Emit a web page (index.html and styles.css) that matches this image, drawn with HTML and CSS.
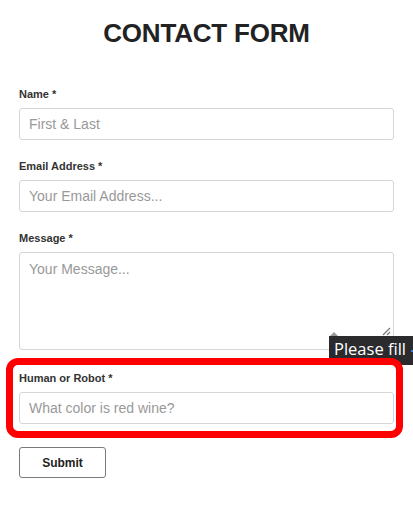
FILE: index.html
```
<!DOCTYPE html>
<html>
<head>
<meta charset="utf-8">
<link rel="stylesheet" href="styles.css">
</head>
<body>
<div class="page">
  <h1 class="title">CONTACT FORM</h1>
  <form class="form">
    <div class="group">
      <label class="label">Name <span class="req">*</span></label>
      <input class="field" type="text" placeholder="First &amp; Last">
    </div>
    <div class="group">
      <label class="label">Email Address <span class="req">*</span></label>
      <input class="field" type="text" placeholder="Your Email Address...">
    </div>
    <div class="group group-msg">
      <label class="label">Message <span class="req">*</span></label>
      <textarea class="field area" placeholder="Your Message..."></textarea>
      <svg class="grip" width="9" height="9" viewBox="0 0 9 9"><path d="M8 1 L1 8 M8 5 L5 8" stroke="#777" stroke-width="1.2" fill="none"/></svg>
      <div class="tip"><span class="tip-arrow"></span><span class="tip-text">Please fill</span><span class="tip-cut"></span></div>
    </div>
    <div class="group group-human">
      <label class="label">Human or Robot <span class="req">*</span></label>
      <input class="field" type="text" placeholder="What color is red wine?">
    </div>
    <button class="submit" type="button">Submit</button>
  </form>
</div>
</body>
</html>
```
FILE: styles.css
```
html, body {
  margin: 0;
  padding: 0;
  background: #fff;
  overflow: hidden;
}
.page {
  padding: 18px 19px 0 19px;
  font-family: "Liberation Sans", Arial, sans-serif;
  color: #333;
}
.title {
  margin: 0 0 40px 0;
  text-align: center;
  font-size: 26px;
  line-height: 30px;
  font-weight: 700;
  letter-spacing: -0.2px;
  color: #222;
}
.form {
  display: flex;
  flex-direction: column;
}
.group {
  display: flex;
  flex-direction: column;
  margin-bottom: 20px;
  position: relative;
}
.group-msg {
  margin-bottom: 22px;
}
.group-human {
  margin-bottom: 23px;
}
.label {
  font-size: 11px;
  line-height: 13px;
  font-weight: 700;
  color: #333;
  margin-bottom: 7px;
}
.req {
  color: #333;
}
.field {
  box-sizing: border-box;
  width: 100%;
  height: 32px;
  margin: 0;
  padding: 0 9px;
  border: 1px solid #d6d6d6;
  border-radius: 3px;
  font-family: "Liberation Sans", Arial, sans-serif;
  font-size: 14px;
  color: #333;
  background: #fff;
  outline: none;
}
.field::placeholder {
  color: #999;
}
.area {
  height: 98px;
  padding: 6px 9px;
  line-height: 20px;
  resize: none;
  display: block;
}
.grip {
  position: absolute;
  left: 363px;
  top: 95px;
}
.tip {
  position: absolute;
  left: 310px;
  right: -19px;
  top: 104px;
  height: 29px;
  box-sizing: border-box;
  padding: 3px 0 0 5px;
  background: #2b2b2e;
  color: #fff;
  font-family: "Open Sans", "Noto Sans", sans-serif;
  font-size: 16.5px;
  line-height: 20px;
  white-space: nowrap;
  z-index: 1;
  display: flex;
  align-items: flex-start;
}
.tip-cut {
  display: block;
  width: 2px;
  height: 2px;
  margin: 11px 0 0 5px;
  background: #3d7bd9;
}
.tip-arrow {
  position: absolute;
  left: 1px;
  top: -4px;
  width: 0;
  height: 0;
  border-left: 4px solid transparent;
  border-right: 4px solid transparent;
  border-bottom: 4px solid #9a9a9a;
}
.group-human::before {
  content: "";
  position: absolute;
  top: -14px;
  left: -13px;
  right: -9px;
  bottom: -14px;
  border: 7px solid #ff0000;
  border-radius: 12px;
  pointer-events: none;
  z-index: 2;
}
.submit {
  align-self: flex-start;
  box-sizing: border-box;
  width: 87px;
  height: 31px;
  margin: 0;
  padding: 0;
  background: #fff;
  border: 1px solid #7a7a7a;
  border-radius: 3px;
  font-family: "Liberation Sans", Arial, sans-serif;
  font-size: 12px;
  font-weight: 700;
  color: #222;
}
```
